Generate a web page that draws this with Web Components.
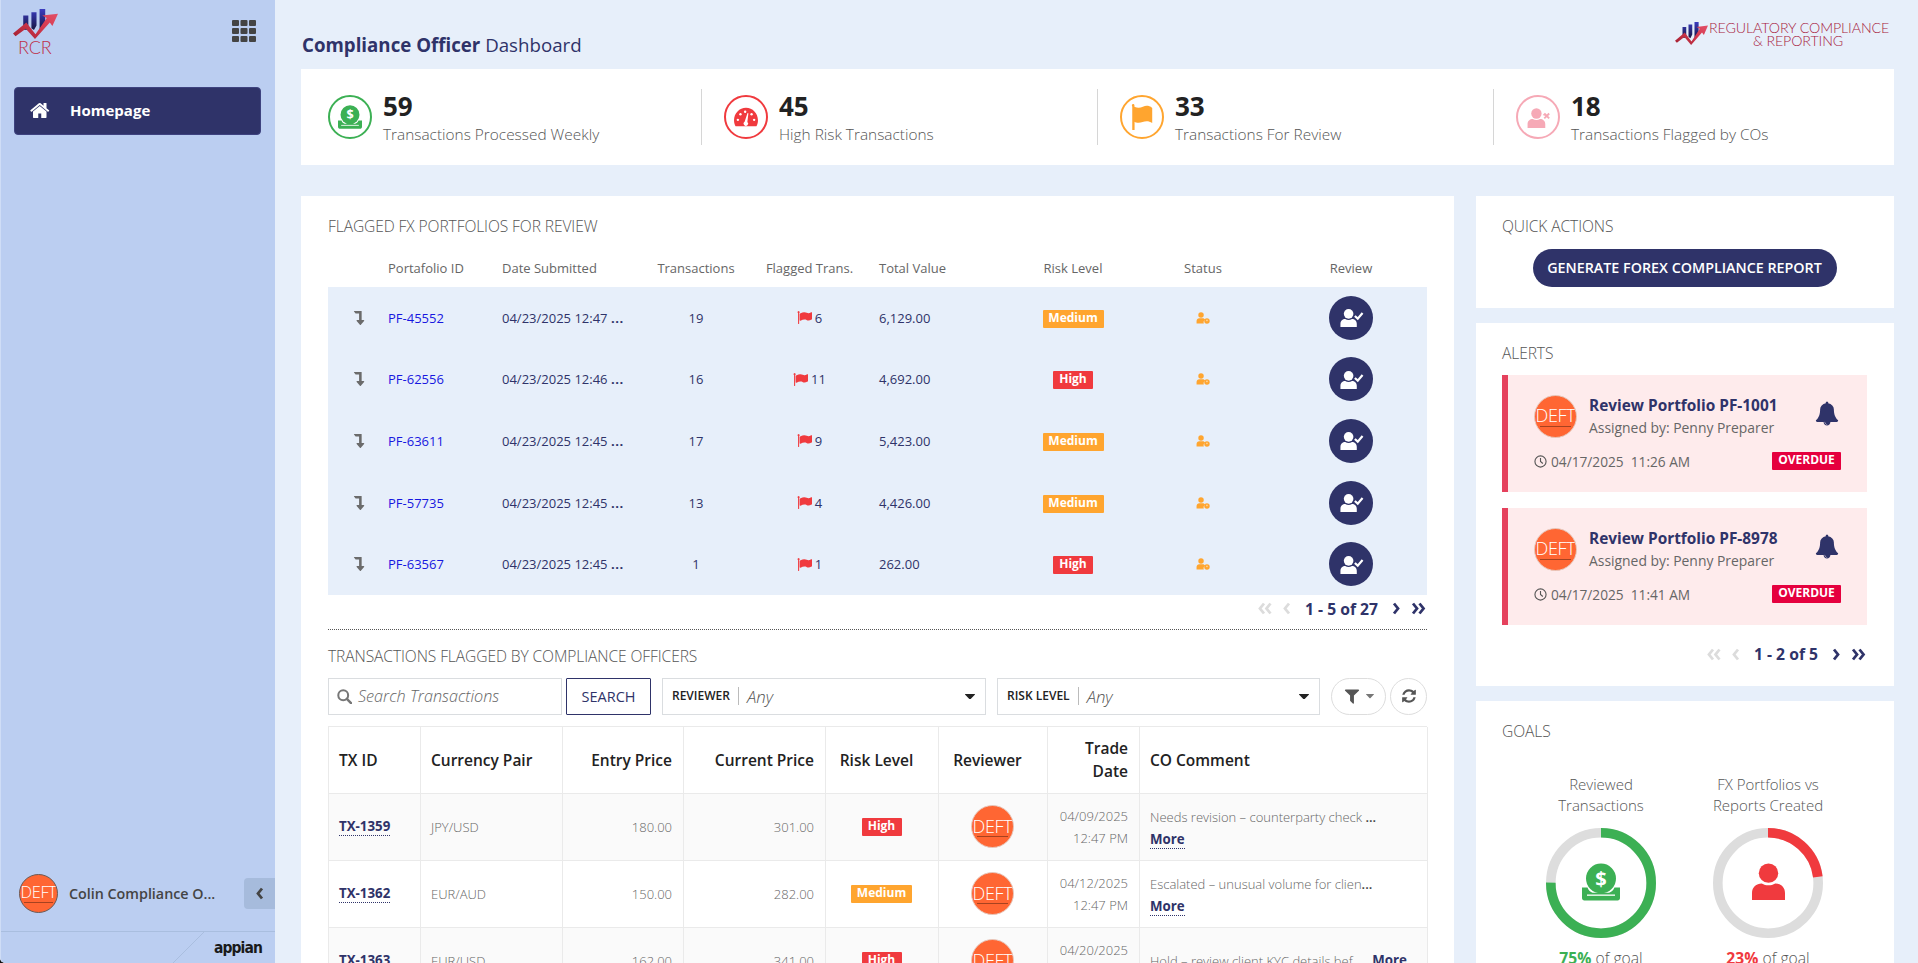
<!DOCTYPE html>
<html lang="en"><head><meta charset="utf-8"><title>Compliance Officer Dashboard</title>
<style>
html,body{margin:0;padding:0;width:1918px;height:963px;overflow:hidden;background:#111}
body{font-family:"Open Sans","Liberation Sans",sans-serif;font-size:13px;color:#2F3369}
</style></head><body>
<x-app></x-app>
<script>
const NAVY='#2F3369',RED='#F03A3E',ORANGE='#FFA52F',GREEN='#3CB054',PINK='#F6A9B6';
const FA={
 home:'M1408 992v480q0 26-19 45t-45 19h-384v-384h-256v384h-384q-26 0-45-19t-19-45v-480q0-1 .5-3t.5-3l575-474 575 474q1 2 1 6zm223-69l-62 74q-8 9-21 11h-3q-13 0-21-7l-692-577-692 577q-12 8-24 7-13-2-21-11l-62-74q-8-10-7-23.500t11-21.500l719-599q32-26 76-26t76 26l244 204v-195q0-14 9-23t23-9h192q14 0 23 9t9 23v408l219 182q10 8 11 21.500t-7 23.500z',
 flag:'M320 256q0 72-64 110v1266q0 13-9.500 22.500t-22.500 9.500h-64q-13 0-22.500-9.500t-9.500-22.500v-1266q-64-38-64-110 0-53 37.500-90.500t90.500-37.500 90.500 37.500 37.500 90.500zm1472 64v763q0 25-12.500 38.500t-39.500 27.500q-215 116-369 116-61 0-123.500-22t-108.500-48-115.500-48-142.500-22q-192 0-464 146-17 9-33 9-26 0-45-19t-19-45v-742q0-32 31-55 21-14 79-43 236-120 421-120 107 0 200 29t219 88q38 19 88 19 54 0 117.500-21t110-47 88-47 54.500-21q26 0 45 19t19 45z',
 bell:'M912 1696q0-16-16-16-59 0-101.500-42.500t-42.500-101.500q0-16-16-16t-16 16q0 73 51.500 124.500t124.500 51.500q16 0 16-16zm816-288q0 52-38 90t-90 38h-448q0 106-75 181t-181 75-181-75-75-181h-448q-52 0-90-38t-38-90q50-42 91-88t85-119.500 74.500-158.500 50-206 19.500-260q0-152 117-282.500t307-158.500q-8-19-8-39 0-40 28-68t68-28 68 28 28 68q0 20-8 39 190 28 307 158.500t117 282.500q0 139 19.500 260t50 206 74.500 158.500 85 119.500 91 88z',
 refresh:'M1639 1056q0 5-1 7-64 268-268 434.500t-478 166.500q-146 0-282.500-55t-243.500-157l-129 129q-19 19-45 19t-45-19-19-45v-448q0-26 19-45t45-19h448q26 0 45 19t19 45-19 45l-137 137q71 66 161 102t187 36q134 0 250-65t186-179q11-17 53-117 8-23 30-23h192q13 0 22.500 9.500t9.500 22.500zm25-800v448q0 26-19 45t-45 19h-448q-26 0-45-19t-19-45 19-45l138-138q-148-137-349-137-134 0-250 65t-186 179q-11 17-53 117-8 23-30 23h-199q-13 0-22.500-9.500t-9.500-22.500v-7q65-268 270-434.500t480-166.500q146 0 284 55.500t245 156.500l130-129q19-19 45-19t45 19 19 45z',
 level:'M225 192h704q13 0 22.500 9.500t9.500 23.500v863h192q40 0 58 37t-9 69l-320 384q-18 22-49 22t-49-22l-320-384q-26-31-9-69 18-37 58-37h192v-640h-320q-14 0-25-11l-160-192q-13-14-4-34 9-19 29-19z',
 filter:'M1595 295q17 41-14 70l-493 493v742q0 42-39 59-13 5-25 5-27 0-45-19l-256-256q-19-19-19-45v-486l-493-493q-31-29-14-70 17-39 59-39h1280q42 0 59 39z'
};
const fa=(n,w,h,c)=>`<svg width="${w}" height="${h}" viewBox="0 0 1792 1792" fill="${c}" preserveAspectRatio="xMidYMid meet" style="display:block;flex:none"><path d="${FA[n]}"/></svg>`;
const person=(c)=>`<circle cx="10" cy="6.2" r="5"/><path d="M1.500 20v-3.600c0-3 2.300-4.900 5-4.900 1.200.6 2.200 1 3.500 1s2.300-.4 3.500-1c2.700 0 5 1.900 5 4.900V20z"/>`;
const ICONS={
 grid:(s)=>`<svg width="24" height="22" viewBox="0 0 24 22" fill="#444" style="display:block">${[0,8.500,17].flatMap(x=>[0,8,16].map(y=>`<rect x="${x}" y="${y}" width="7" height="6" rx="1"/>`)).join('')}</svg>`,
 money:(s,c)=>`<svg width="${s}" height="${s}" viewBox="0 0 38 37" style="display:block;flex:none"><circle cx="19" cy="15" r="15" fill="${c}"/><path d="M0 24h5.500c1 2.800 3 4.500 5 5.300H27c2.300-.8 4.300-2.500 5.500-5.300H38v10.500c0 1.300-1 2.500-2.300 2.500H2.300C1 37 0 35.800 0 34.500z" fill="${c}"/><rect x="5" y="31" width="28" height="1.300" fill="#fff"/><text x="19" y="22" text-anchor="middle" font-family="Open Sans" font-weight="700" font-size="20" fill="#fff">$</text></svg>`,
 gauge:(s,c)=>`<svg width="${s}" height="${s*.82}" viewBox="0 0 28 23" style="display:block;flex:none"><path d="M14 1C6.300 1 0 7.500 0 15.500c0 2.600.7 5 1.800 7h24.400c1.100-2 1.800-4.400 1.800-7C28 7.500 21.700 1 14 1z" fill="${c}"/><g fill="#fff"><circle cx="4.500" cy="15" r="1.400"/><circle cx="7.500" cy="8.500" r="1.400"/><circle cx="13" cy="5.500" r="1.400"/><circle cx="20.500" cy="8.500" r="1.400"/><circle cx="23.500" cy="15" r="1.400"/><path d="M15.800 7l1 .2-1.200 10.300a2.600 2.600 0 1 1-3.200-.2z"/></g></svg>`,
 flagBig:(s,c)=>`<svg width="${s}" height="${s}" viewBox="0 0 23 28" style="display:block;flex:none"><path fill="${c}" d="M.6 1.500C.6.600 1.300 0 2 0s1.400.6 1.400 1.500c0 .4-.1.700-.4 1 .9.700 2 1.500 4.500 1.600 3 .2 6.600-2 9-2.100 2 0 3.900.6 6 2.200v16.300c-2-1.500-4-2-5.900-2-3.200 0-5.800 1.700-8.700 1.700-2 0-3.800-.5-4.400-1.100v8.500c0 .7-.6 1.300-1.300 1.300S1 28.200 1 27.500V2.600c-.2-.3-.4-.7-.4-1.100z"/></svg>`,
 personx:(s,c)=>`<svg width="${s}" height="${s}" viewBox="0 0 24 20" fill="${c}" style="display:block;flex:none">${person()}<path d="M17.800 8.500l2.200-2.200 1.700 1.700 1.700-1.700 1.300 1.300-1.700 1.700 1.700 1.700-1.300 1.300-1.700-1.700-1.700 1.700-1.300-1.300 1.700-1.700z" transform="translate(-1.800 -.8) scale(1)"/></svg>`,
 person:(s,c)=>`<svg width="${s}" height="${s*1.120}" viewBox="1.500 1 17 19" fill="${c}" style="display:block;flex:none">${person()}</svg>`,
 check:(s)=>`<svg width="${s}" height="${s}" viewBox="0 0 26 20" style="display:block;flex:none" fill="#fff">${person()}<path d="M18.500 9l3 2.800 5-5.800" fill="none" stroke="#fff" stroke-width="2.300" transform="translate(-2 -.6)"/></svg>`,
 status:(s,c)=>`<svg width="${s}" height="${s*.85}" viewBox="0 0 28 24" style="display:block;flex:none" fill="${c}"><circle cx="10" cy="6" r="5.500"/><path d="M1 23v-5c0-3 2.500-5.500 5.500-5.500h7c2.200 0 4 1.200 5 3-2 1-3.300 3-3.300 5 0 1 .2 1.800.6 2.500z"/><circle cx="22" cy="18" r="5.500"/><path d="M22 15.500v3" stroke="#fff" stroke-width="1.700"/></svg>`,
 clock:(s,c)=>`<svg width="${s}" height="${s}" viewBox="0 0 14 14" fill="none" stroke="${c}" stroke-width="1.200" style="display:block;flex:none"><circle cx="7" cy="7" r="6"/><path d="M7 3.200V7l2.500 2.200"/></svg>`,
 search:(s,c)=>`<svg width="${s}" height="${s}" viewBox="0 0 14 14" fill="none" stroke="${c}" stroke-width="1.900" style="display:block;flex:none"><circle cx="5.800" cy="5.800" r="4.600"/><path d="M9.200 9.200l3.900 3.900" stroke-width="2.300" stroke-linecap="round"/></svg>`,
 caret:(w,c)=>`<svg width="${w}" height="${w*.55}" viewBox="0 0 10 5.500" fill="${c}" style="display:block;flex:none"><path d="M0 .3C0 .1.200 0 .5 0h9c.3 0 .5.100.5.300 0 .2-.1.300-.2.400L5.400 5.300a.6.6 0 0 1-.8 0L.2.700C.1.600 0 .5 0 .3z"/></svg>`,
 chev:(dir,dbl,c,w,h)=>{const d=dir==='l'?(x)=>`M${x+5.500} 1.500L${x+1.500} 6.500L${x+5.500} 11.500`:(x)=>`M${x+1.500} 1.500L${x+5.500} 6.500L${x+1.500} 11.500`;
   return `<svg width="${w}" height="13" viewBox="0 0 ${dbl?14:7} 13" fill="none" stroke="${c}" stroke-width="2.800" style="display:block;flex:none"><path d="${dbl?d(0)+d(6.500):d(0)}"/></svg>`}
};
const LOGO=(w,h)=>`<svg width="${w}" height="${h}" viewBox="0 0 44 32" preserveAspectRatio="none" style="display:block;flex:none"><defs><linearGradient id="b" x1="0" y1="0" x2="0" y2="1"><stop offset="0" stop-color="#3C3DC0"/><stop offset="1" stop-color="#15153F"/></linearGradient><linearGradient id="r" x1="0" y1="1" x2="1" y2="0"><stop offset="0" stop-color="#A11F30"/><stop offset=".6" stop-color="#D63A50"/><stop offset="1" stop-color="#E25068"/></linearGradient></defs><path fill="url(#b)" d="M10 7h5v15h-5zM18 3.500h5v14l-2.500 5-2.500-2zM26 0h5.500v14l-5.500 9z"/><path fill="url(#r)" d="M0 26l13-11.500 9 12.500L33 9.500 28.500 7 44 5l-5.500 13-2.500-3.500L21.500 32 12.500 21l-10 8z"/></svg>`;
const define=(n,c)=>customElements.define(n,c);
class Base extends HTMLElement{constructor(){super();this.attachShadow({mode:'open'})}
 connectedCallback(){if(!this.done){this.done=true;this.shadowRoot.innerHTML=this.view()}}
 a(n,d=''){return this.getAttribute(n)??d}}

define('x-avatar',class extends Base{view(){const s=+this.a('size',43);return `<style>:host{display:block;flex:none;width:${s}px;height:${s}px}
 div{width:100%;height:100%;box-sizing:border-box;border-radius:50%;background:#FF6633;border:1px solid ${this.hasAttribute('dark')?'#6b5a55':'#e7c8bd'};color:#fff;font:300 ${s*.42}px/1 "Open Sans",sans-serif;display:flex;flex-direction:column;align-items:center;justify-content:center;overflow:hidden;letter-spacing:-.3px}
 i{display:block;width:78%;height:1px;background:#6b2a14;opacity:.6;margin-top:${s*.04}px}</style><div><span>DEFT</span><i></i></div>`}});

define('x-badge',class extends Base{view(){const k=this.a('kind','High');const bg={High:RED,Medium:ORANGE,OVERDUE:'#E5003E'}[k];const w={High:40,Medium:61,OVERDUE:69}[k];
 return `<style>:host{display:inline-block}
 div{box-sizing:border-box;width:${w}px;height:18px;background:${bg};color:#fff;font:700 12px/16px "Open Sans",sans-serif;text-align:center;border-radius:1px}</style><div>${k}</div>`}});

define('x-heading',class extends Base{view(){return `<style>:host{display:block;font:300 15.600px/20px "Open Sans",sans-serif;color:#555;letter-spacing:-.1px}</style><slot></slot>`}});

define('x-card',class extends Base{view(){return `<style>:host{display:block;background:#fff;box-sizing:border-box;padding:${this.a('pad','20px 27px 18px 26px')}}</style><slot></slot>`}});

define('x-pager',class extends Base{view(){const g='#DCDCDC';return `<style>:host{display:flex;align-items:center;justify-content:flex-end;height:28px;font:700 15.700px/28px "Open Sans",sans-serif;color:${NAVY}}
 .t{margin:0 14px 0 14px;white-space:nowrap}.s{margin-right:10px}.e{margin-left:11px;margin-right:1px}</style>
 <span class="s">${ICONS.chev('l',1,g,15)}</span>${ICONS.chev('l',0,g,8)}<span class="t">${this.a('text')}</span>${ICONS.chev('r',0,NAVY,8)}<span class="e">${ICONS.chev('r',1,NAVY,15)}</span>`}});

define('x-kpi',class extends Base{view(){const c=this.a('color');const ic={money:ICONS.money(24,c),gauge:ICONS.gauge(24,c),flag:ICONS.flagBig(26,c),personx:ICONS.personx(25,c)}[this.a('icon')];
 return `<style>:host{display:flex;box-sizing:border-box;padding-left:22px;height:56px;border-right:1px solid ${this.hasAttribute('last')?'transparent':'#D6D6D6'}}
 .c{flex:none;box-sizing:border-box;width:44px;height:44px;margin-top:6px;border-radius:50%;border:2px solid ${c};display:flex;align-items:center;justify-content:center}
 .x{margin-left:11px;padding-top:3px}
 b{display:block;font:700 26px/28px "Open Sans",sans-serif;color:#222;margin-bottom:1px}
 span{display:block;font:300 15.400px/28px "Open Sans",sans-serif;color:#555;white-space:nowrap}</style>
 <div class="c">${ic}</div><div class="x"><b>${this.a('num')}</b><span>${this.a('label')}</span></div>`}});

define('x-portfolio-table',class extends Base{view(){
 const rows=[['PF-45552','04/23/2025 12:47','19','6','6,129.00','Medium'],['PF-62556','04/23/2025 12:46','16','11','4,692.00','High'],['PF-63611','04/23/2025 12:45','17','9','5,423.00','Medium'],['PF-57735','04/23/2025 12:45','13','4','4,426.00','Medium'],['PF-63567','04/23/2025 12:45','1','1','262.00','High']];
 return `<style>:host{display:block;margin-top:13px;font:400 13px/18px "Open Sans",sans-serif;color:${NAVY}}
 .g{display:grid;grid-template-columns:60px 114px 150px 88px 139px 133px 122px 138px 155px;align-items:center}
 .h{height:38px;color:#666}.h span{white-space:nowrap}.r{height:61.6px;background:#E7EFFA}
 .c{text-align:center}.id{color:#1717E0}.lv{padding-left:6px;display:flex;justify-content:center}
 .fl{display:flex;justify-content:center;align-items:center;gap:3px}.st{display:flex;justify-content:center}
 .rv{display:flex;justify-content:center;padding-left:3px}.btn{width:44px;height:44px;border-radius:50%;background:${NAVY};display:flex;align-items:center;justify-content:center}
 .d b{font-weight:700;letter-spacing:.6px}</style>
 <div class="g h"><span></span><span>Portafolio ID</span><span>Date Submitted</span><span class="c">Transactions</span><span class="c">Flagged Trans.</span><span>Total Value</span><span class="c">Risk Level</span><span class="c">Status</span><span class="c" style="padding-left:3px">Review</span></div>
 ${rows.map(r=>`<div class="g r"><span class="lv">${fa('level',18,18,'#6b6b6b')}</span><span class="id">${r[0]}</span><span class="d">${r[1]} <b>...</b></span><span class="c">${r[2]}</span><span class="fl">${fa('flag',15,15,RED)}${r[3]}</span><span>${r[4]}</span><span class="c"><x-badge kind="${r[5]}"></x-badge></span><span class="st">${ICONS.status(14,ORANGE)}</span><span class="rv"><span class="btn">${ICONS.check(25)}</span></span></div>`).join('')}`}});

define('x-select',class extends Base{view(){return `<style>:host{display:flex;align-items:center;box-sizing:border-box;height:37px;width:${this.a('w')}px;flex:none;border:1px solid #DADDE0;background:#fff;padding:0 10px 0 9px;font-family:"Open Sans",sans-serif}
 b{font-weight:600;font-size:12px;color:#222;line-height:18px;padding-right:8px;border-right:1px solid #BBB;white-space:nowrap}
 i{flex:1;font-style:italic;font-weight:300;font-size:16.800px;color:#555;padding-left:8px}</style><b>${this.a('label')}</b><i>Any</i>${ICONS.caret(10,'#222')}`}});

define('x-search-bar',class extends Base{view(){return `<style>:host{display:flex;margin-top:12px;height:37px;font-family:"Open Sans",sans-serif}
 .in{box-sizing:border-box;width:234px;height:37px;border:1px solid #DADDE0;display:flex;align-items:center;gap:6px;padding-left:8px;font-style:italic;font-size:16.200px;color:#666;font-weight:300;white-space:nowrap}
 .bt{box-sizing:border-box;width:85px;height:37px;margin-left:4px;border:1px solid ${NAVY};border-radius:1px;color:${NAVY};font-size:14.500px;font-weight:400;display:flex;align-items:center;justify-content:center;margin-right:11px}
 x-select+x-select{margin-left:11px}
 .f{box-sizing:border-box;width:55px;height:37px;margin-left:11px;border:1px solid #DDD;border-radius:19px;display:flex;align-items:center;justify-content:center;gap:5px}
 .r{box-sizing:border-box;width:37px;height:37px;margin-left:4px;border:1px solid #DDD;border-radius:50%;display:flex;align-items:center;justify-content:center}</style>
 <div class="in">${ICONS.search(15,'#777')}<span>Search Transactions</span></div><div class="bt">SEARCH</div>
 <x-select w="324" label="REVIEWER"></x-select><x-select w="323" label="RISK LEVEL"></x-select>
 <div class="f">${fa('filter',18,18,'#555')}${ICONS.caret(8,'#777')}</div><div class="r">${fa('refresh',16,16,'#555')}</div>`}});

define('x-flag-table',class extends Base{view(){
 const rows=[['TX-1359','JPY/USD','180.00','301.00','High','04/09/2025','Needs revision – counterparty check <b>...</b>',1],['TX-1362','EUR/AUD','150.00','282.00','Medium','04/12/2025','Escalated – unusual volume for clien<b>...</b>',1],['TX-1363','EUR/USD','162.00','341.00','High','04/20/2025','Hold – review client KYC details bef<b>...</b>',0]];
 return `<style>:host{display:block;margin-top:11px;font:300 13px/22px "Open Sans",sans-serif;color:#666}
 .g{display:grid;grid-template-columns:92px 142px 121px 142px 113px 109px 92px 288px;border-top:1px solid #EAEAEA;border-left:1px solid #EAEAEA;box-sizing:border-box;grid-auto-rows:67px}
 .g>div{box-sizing:border-box;border-right:1px solid #EAEAEA;border-bottom:1px solid #EAEAEA;padding:0 11px 0 10px;display:flex;align-items:center;min-width:0;white-space:nowrap}
 .t{color:#222;font-weight:600;font-size:15.500px;line-height:22.500px}.n{justify-content:flex-end;text-align:right}.m{justify-content:center;text-align:center}
 .g>div.th{padding-right:16px;padding-left:5px}
 .o{background:#FAFAFA}.l{font-weight:700;color:${NAVY};font-size:13.300px;border-bottom:1px dotted ${NAVY};line-height:18px;display:inline-block}
 .cm{display:block!important;padding-top:12px!important}.cm.one{display:flex!important;padding-top:0!important}.cm b{font-weight:600;color:#444}
 .s{white-space:nowrap}</style>
 <div class="g"><div class="t">TX ID</div><div class="t">Currency Pair</div><div class="t n">Entry Price</div><div class="t n">Current Price</div><div class="t m th">Risk Level</div><div class="t m th">Reviewer</div><div class="t n">Trade<br>Date</div><div class="t">CO Comment</div>
 ${rows.map((r,i)=>{const o=i%2?'':' o';return `<div class="${o}"><span class="l">${r[0]}</span></div><div class="${o}">${r[1]}</div><div class="n${o}">${r[2]}</div><div class="n${o}">${r[3]}</div><div class="m${o}"><x-badge kind="${r[4]}"></x-badge></div><div class="m${o}"><x-avatar size="43"></x-avatar></div><div class="n${o}"><span>${r[5]}<br>12:47 PM</span></div><div class="cm${r[7]?'':' one'}${o}">${r[7]?`<span class="s">${r[6]}</span><br><span class="l">More</span>`:`<span class="s">${r[6]}</span><span class="l" style="margin-left:9px">More</span>`}</div>`}).join('')}</div>`}});

define('x-alert',class extends Base{view(){return `<style>:host{display:block;box-sizing:border-box;height:117px;background:#FEEBEC;border-left:6px solid #E5415D;padding:20px 26px 0 26px;margin-bottom:16px;font-family:"Open Sans",sans-serif;color:#666}
 .a{display:flex}.x{flex:1;margin-left:12px}b{display:block;font:700 15.400px/22px "Open Sans",sans-serif;color:${NAVY};white-space:nowrap}
 .s{font-size:13.900px;line-height:22px;font-weight:400;white-space:nowrap}.bl{margin:5px 2px 0 0}
 .d{display:flex;align-items:center;justify-content:space-between;margin-top:13px;height:18px}.t{display:flex;align-items:center;gap:4px;font-size:13.700px;white-space:pre}</style>
 <div class="a"><x-avatar size="43"></x-avatar><div class="x"><b>${this.a('title')}</b><div class="s">Assigned by: Penny Preparer</div></div><div class="bl">${fa('bell',24,27,NAVY)}</div></div>
 <div class="d"><div class="t">${ICONS.clock(13,'#555')}<span>${this.a('time')}</span></div><x-badge kind="OVERDUE"></x-badge></div>`}});

define('x-ring',class extends Base{view(){const p=+this.a('pct'),c=this.a('color'),R=50.2,L=2*Math.PI*R;const ic=this.a('icon')==='money'?ICONS.money(38,c):ICONS.person(33,c);
 return `<style>:host{display:block;width:167px;text-align:center;font:300 15px/21px "Open Sans",sans-serif;color:#555}
 .t{height:42px;white-space:nowrap}.r{position:relative;width:110px;height:110px;margin:12px auto 0;display:flex;align-items:center;justify-content:center}
 svg.o{position:absolute;left:0;top:0}.p{margin-top:9px;line-height:22px;font-size:15.700px}.p b{color:${c};font-weight:700}.ii{position:relative;top:-1px}</style>
 <div class="t">${this.a('l1')}<br>${this.a('l2')}</div>
 <div class="r"><svg class="o" width="110" height="110" viewBox="0 0 110 110" fill="none" stroke-width="9.600"><circle cx="55" cy="55" r="${R}" stroke="#DDDDDD"/><circle cx="55" cy="55" r="${R}" stroke="${c}" stroke-dasharray="${L*p/100} ${L}" transform="rotate(-90 55 55)"/></svg><div class="ii">${ic}</div></div>
 <div class="p"><b>${p}%</b> of goal</div>`}});

define('x-sidebar',class extends Base{view(){return `<style>:host{display:flex;flex-direction:column;flex:none;width:275px;height:963px;box-sizing:border-box;background:#BBCEF1;border-left:1px solid #CFDDF6;border-bottom-left-radius:5px;font-family:"Open Sans",sans-serif;overflow:hidden}
 .top{display:flex;justify-content:space-between;height:87px;box-sizing:border-box;padding:9px 19px 0 12px}
 .lg{width:46px}.rc{display:block;font:300 18px/16px "Lato","Open Sans",sans-serif;color:#BE2F48;margin:0 0 0 5px;letter-spacing:-.2px}
 .gr{margin-top:11px}
 .nv{margin:0 14px 0 13px;height:48px;background:${NAVY};border-radius:4px;display:flex;align-items:center;padding:0 0 2px 15px;color:#fff;font-weight:700;font-size:15px;border:1px solid #3e4380;box-sizing:border-box;gap:19px}
 .sp{flex:1}.u{display:flex;align-items:center;height:39px;margin-bottom:18px;padding-left:18px;color:#444;font-weight:600;font-size:14.300px}
 .nm{flex:1;margin-left:11px;white-space:nowrap}
 .co{width:31px;height:31px;background:#A6BBDC;border-radius:4px 0 0 4px;display:flex;align-items:center;justify-content:center}
 .f{position:relative;height:32px;box-sizing:border-box;border-top:1px solid #A9BEDF;display:flex;justify-content:flex-end;align-items:center;padding-right:13px}
 .f svg{position:absolute;left:171px;top:0}
 .ap{font:700 15.500px/20px "DejaVu Sans Condensed","DejaVu Sans",sans-serif;color:#1a1a1a;letter-spacing:-.9px;position:relative}</style>
 <div class="top"><div class="lg">${LOGO(45,30)}<span class="rc">RCR</span></div><div class="gr">${ICONS.grid()}</div></div>
 <div class="nv">${fa('home',21,21,'#fff')}<span>Homepage</span></div>
 <div class="sp"></div>
 <div class="u"><x-avatar size="39" dark></x-avatar><span class="nm">Colin Compliance O...</span><span class="co">${ICONS.chev('l',0,'#444',8)}</span></div>
 <div class="f"><svg width="33" height="32" viewBox="0 0 33 32"><path d="M0 32L32 0" stroke="#A9BEDF"/></svg><span class="ap">appian</span></div>`}});

define('x-header',class extends Base{view(){return `<style>:host{display:flex;justify-content:space-between;height:69px;box-sizing:border-box;flex:none;color:${NAVY};font-family:"Open Sans",sans-serif}
 h1{margin:32px 0 0 1px;font:400 18.700px/26px "Open Sans",sans-serif}h1 b{font-weight:700}
 .l{display:flex;margin:22px 7px 0 0}.tx{font:300 14.200px/13px "Lato","Open Sans",sans-serif;color:#A8233F;text-align:center;margin:-1px 0 0 1px;width:178px;white-space:nowrap;letter-spacing:-.1px}</style>
 <h1><b>Compliance Officer</b> Dashboard</h1><div class="l">${LOGO(33,23)}<div class="tx">REGULATORY COMPLIANCE<br>&amp; REPORTING</div></div>`}});

define('x-app',class extends Base{view(){return `<style>:host{display:flex;width:1918px;height:963px;background:#E7EFFA;overflow:hidden;border-bottom-left-radius:5px}
 main{flex:1;min-width:0;box-sizing:border-box;padding:0 24px 0 26px;display:flex;flex-direction:column;height:963px;overflow:hidden}
 .k{flex:none;background:#fff;height:96px;box-sizing:border-box;padding:20px 0 20px 5px;display:grid;grid-template-columns:repeat(4,396px)}
 .row{display:flex;gap:22px;margin-top:31px;flex:none;align-items:flex-start}
 .l{width:1153px;flex:none;height:800px}.rg{width:418px;flex:none;display:flex;flex-direction:column;gap:15px}
 hr{border:0;border-top:1px dotted #555;margin:6px 0 16px}
 .bw{display:flex;justify-content:center;margin-top:13px}
 .bn{width:304px;height:38px;border-radius:19px;background:${NAVY};color:#fff;font:600 14.300px/38px "Open Sans",sans-serif;text-align:center}
 .rgs{display:flex;justify-content:center;margin-top:32.500px}
 .al{margin-top:12px}x-alert:last-child{margin-bottom:0}.al+x-pager{margin-top:15px}</style>
 <x-sidebar></x-sidebar>
 <main>
 <x-header></x-header>
 <div class="k">
  <x-kpi icon="money" color="${GREEN}" num="59" label="Transactions Processed Weekly"></x-kpi>
  <x-kpi icon="gauge" color="${RED}" num="45" label="High Risk Transactions"></x-kpi>
  <x-kpi icon="flag" color="${ORANGE}" num="33" label="Transactions For Review"></x-kpi>
  <x-kpi icon="personx" color="${PINK}" num="18" label="Transactions Flagged by COs" last></x-kpi>
 </div>
 <div class="row">
  <x-card class="l" pad="20px 27px 0 27px">
   <x-heading>FLAGGED FX PORTFOLIOS FOR REVIEW</x-heading>
   <x-portfolio-table></x-portfolio-table>
   <x-pager text="1 - 5 of 27"></x-pager>
   <hr>
   <x-heading>TRANSACTIONS FLAGGED BY COMPLIANCE OFFICERS</x-heading>
   <x-search-bar></x-search-bar>
   <x-flag-table></x-flag-table>
  </x-card>
  <div class="rg">
   <x-card pad="20px 27px 21px 26px"><x-heading>QUICK ACTIONS</x-heading><div class="bw"><div class="bn">GENERATE FOREX COMPLIANCE REPORT</div></div></x-card>
   <x-card><x-heading>ALERTS</x-heading><div class="al">
     <x-alert title="Review Portfolio PF-1001" time="04/17/2025  11:26 AM"></x-alert>
     <x-alert title="Review Portfolio PF-8978" time="04/17/2025  11:41 AM"></x-alert></div>
     <x-pager text="1 - 2 of 5"></x-pager></x-card>
   <x-card style="height:280px"><x-heading>GOALS</x-heading><div class="rgs">
     <x-ring l1="Reviewed" l2="Transactions" pct="75" color="${GREEN}" icon="money"></x-ring>
     <x-ring l1="FX Portfolios vs" l2="Reports Created" pct="23" color="${RED}" icon="person"></x-ring></div></x-card>
  </div>
 </div>
 </main>`}});
</script>
</body></html>
